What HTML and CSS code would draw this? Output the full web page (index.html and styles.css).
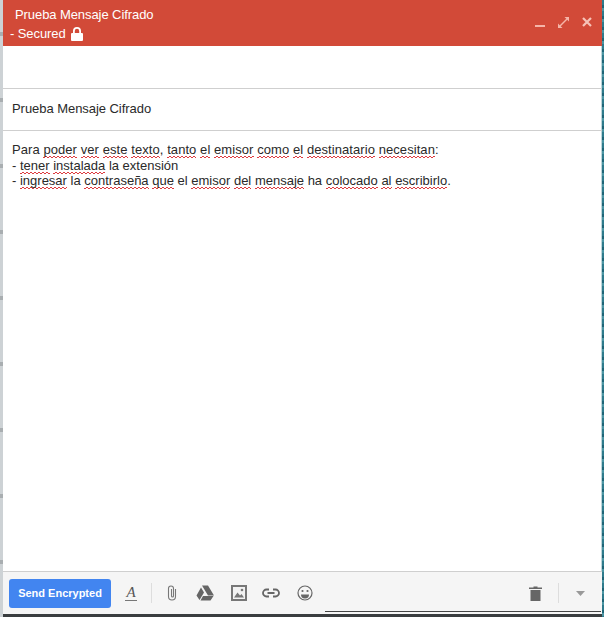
FILE: index.html
```html
<!DOCTYPE html>
<html lang="es">
<head>
<meta charset="utf-8">
<title>Prueba Mensaje Cifrado</title>
<link rel="stylesheet" href="styles.css">
</head>
<body>
<div class="window">
  <div class="edge-left"></div>
  <main class="compose">
    <header class="titlebar">
      <div class="title">
        <div class="title-name">Prueba Mensaje Cifrado</div>
        <div class="title-status">- Secured
          <svg class="lock" viewBox="0 0 12 14" width="12" height="14"><path fill="#fff" d="M1 6h1V4a4 4 0 0 1 8 0v2h1a1 1 0 0 1 1 1v6a1 1 0 0 1-1 1H1a1 1 0 0 1-1-1V7a1 1 0 0 1 1-1zm2.800 0h4.400V4a2.200 2.200 0 0 0-4.400 0z"/></svg>
        </div>
      </div>
      <div class="controls">
        <svg viewBox="0 0 12 12" width="12" height="12"><rect x="1" y="9" width="10" height="2" fill="#f5b5a8"/></svg>
        <svg viewBox="0 0 13 13" width="13" height="13"><path fill="none" stroke="#f5b5a8" stroke-width="1.500" d="M3 10l7-7"/><path fill="#f5b5a8" d="M7.500 1H12v4.500zM1 7.500V12h4.500z"/></svg>
        <svg viewBox="0 0 12 12" width="12" height="12"><path fill="none" stroke="#f7c2b7" stroke-width="2.200" d="M2 2l8 8M10 2l-8 8"/></svg>
      </div>
    </header>
    <div class="recipients"></div>
    <div class="subject">Prueba Mensaje Cifrado</div>
    <div class="message">
      <div class="line-wide">Para <span class="sp">poder</span> <span class="sp">ver</span> <span class="sp">este</span> <span class="sp">texto</span>, <span class="sp">tanto</span> <span class="sp">el</span> <span class="sp">emisor</span> <span class="sp">como</span> <span class="sp">el</span> <span class="sp">destinatario</span> <span class="sp">necesitan</span>:</div>
      <div>- <span class="sp">tener</span> <span class="sp">instalada</span> la extensión</div>
      <div>- <span class="sp">ingresar</span> la <span class="sp">contraseña</span> <span class="sp">que</span> el <span class="sp">emisor</span> <span class="sp">del</span> <span class="sp">mensaje</span> ha <span class="sp">colocado</span> <span class="sp">al</span> <span class="sp">escribirlo</span>.</div>
    </div>
    <footer class="toolbar">
      <button class="send">Send Encrypted</button>
      <span class="format">A</span>
      <span class="sep"></span>
      <svg class="ic clip" viewBox="0 0 12 16" width="12" height="16"><path fill="none" stroke="#777" stroke-width="1.100" d="M9.500 4v7.500a3.500 3.500 0 0 1-7 0V3.500a2.500 2.500 0 0 1 5 0V11a1 1 0 0 1-2 0V4"/></svg>
      <svg class="ic drive" viewBox="0 0 18 16" width="18" height="16"><path fill="#666" d="M6 .5h6l6 10h-6zM5 2.500l3 5-4.500 7.500L.5 10.500zM7 11h10.500l-3 4.500H4.500z"/></svg>
      <svg class="ic photo" viewBox="0 0 16 16" width="16" height="16"><path fill="#777" d="M0 0h16v16H0z"/><path fill="#f2f2f2" d="M2 2h12v12H2z"/><path fill="#777" d="M3 12.500l3.500-5 2.500 3 1.500-1.500 2.500 3.500z"/><circle cx="11" cy="5" r="1.300" fill="#777"/></svg>
      <svg class="ic link" viewBox="0 0 18 10" width="18" height="10"><path fill="none" stroke="#666" stroke-width="1.800" d="M7 1.500H4.500a3.500 3.500 0 0 0 0 7H7M11 1.500h2.500a3.500 3.500 0 0 1 0 7H11M5.500 5h7"/></svg>
      <svg class="ic smile" viewBox="0 0 16 16" width="16" height="16"><circle cx="8" cy="8" r="7" fill="none" stroke="#666" stroke-width="1.200"/><circle cx="5.500" cy="6" r="1.100" fill="#666"/><circle cx="10.500" cy="6" r="1.100" fill="#666"/><path fill="#666" d="M4 9.500h8a4 4 0 0 1-8 0z"/></svg>
      <span class="spacer"></span>
      <svg class="ic trash" viewBox="0 0 13 15" width="13" height="15"><path fill="#666" d="M0 1.500h4.500V.5h4v1H13V3H0zM1.500 4h10v11h-10z"/></svg>
      <span class="sep sep-right"></span>
      <svg class="ic more" viewBox="0 0 9 5" width="9" height="5"><path fill="#999" d="M0 0h9L4.500 5z"/></svg>
    </footer>
    <div class="bottom-line"></div>
  </main>
  <div class="edge-right"></div>
</div>
</body>
</html>
```
FILE: styles.css
```css
* { box-sizing: border-box; }
html, body { margin: 0; height: 100%; }
body { font-family: "Liberation Sans", Arial, sans-serif; background: #fff; overflow: hidden; }
.window { display: flex; width: 604px; height: 617px; }
.edge-left { width: 3px; background: repeating-linear-gradient(180deg, #cdd2d5 0, #cdd2d5 32px, #a9aeb1 32px, #a9aeb1 36px, #cdd2d5 36px, #cdd2d5 66px); }
.edge-right { width: 2px; background: repeating-linear-gradient(180deg, #2f7b8c 0, #2f7b8c 5px, #1f6577 5px, #1f6577 8px, #4b95a3 8px, #4b95a3 11px); }
.compose { flex: 1; min-width: 0; display: flex; flex-direction: column; background: #fff; box-shadow: inset -1px 0 0 #bcd6db; }
.titlebar { height: 46px; background: #d24a38; color: #fff; display: flex; justify-content: space-between; padding: 6px 9px 0 7px; flex: none; }
.title { font-size: 13px; line-height: 18px; letter-spacing: -0.08px; }
.title-name { padding-left: 5px; }
.title-status { display: flex; align-items: center; gap: 5px; height: 18px; margin-top: 1px; }
.controls { display: flex; gap: 11px; align-items: flex-start; padding-top: 10px; }
.recipients { height: 43px; border-bottom: 1px solid #cfcfcf; flex: none; }
.subject { height: 42px; border-bottom: 1px solid #cfcfcf; flex: none; padding: 12px 0 0 9px; font-size: 13px; line-height: 16px; color: #2a2a2a; letter-spacing: -0.05px; }
.message { flex: 1; padding: 11px 9px 0; font-size: 13px; line-height: 15.5px; color: #2a2a2a; }
.line-wide { letter-spacing: 0.07px; }
.sp { padding-bottom: 1px; background-image: linear-gradient(135deg, transparent 35%, #dd3b3f 35%, #dd3b3f 65%, transparent 65%), linear-gradient(45deg, transparent 35%, #dd3b3f 35%, #dd3b3f 65%, transparent 65%); background-size: 4px 2px; background-position: 0 100%, 2px 100%; background-repeat: repeat-x; }
.toolbar { position: relative; height: 43px; flex: none; display: flex; align-items: center; background: #f5f5f5; border-top: 1px solid #cfcfcf; padding: 0 0 0 6px; }
.toolbar::after { content: ""; position: absolute; left: 322px; right: 1px; bottom: 2px; height: 1px; background: #444; }
.send { width: 102px; height: 29px; border: 0; border-radius: 3px; background: #4285f0; color: #fff; font: bold 11px "Liberation Sans", Arial, sans-serif; padding: 0; }
.format { margin-left: 14px; width: 12px; font: italic 15px "Liberation Serif", serif; color: #555; border-bottom: 1px solid #777; line-height: 15px; text-align: center; }
.sep { width: 1px; height: 20px; background: #ddd; margin-left: 14px; }
.ic { flex: none; display: block; }
.clip { margin-left: 14px; }
.drive { margin-left: 18px; }
.photo { margin-left: 17px; }
.link { margin-left: 15px; }
.smile { margin-left: 17px; }
.spacer { flex: 1; }
.trash { margin-right: 16px; margin-left: -1px; }
.sep-right { margin-left: 0; margin-right: 17px; }
.more { margin-right: 17px; }
.bottom-line { height: 3px; flex: none; background: #3a3d3f; }
```
